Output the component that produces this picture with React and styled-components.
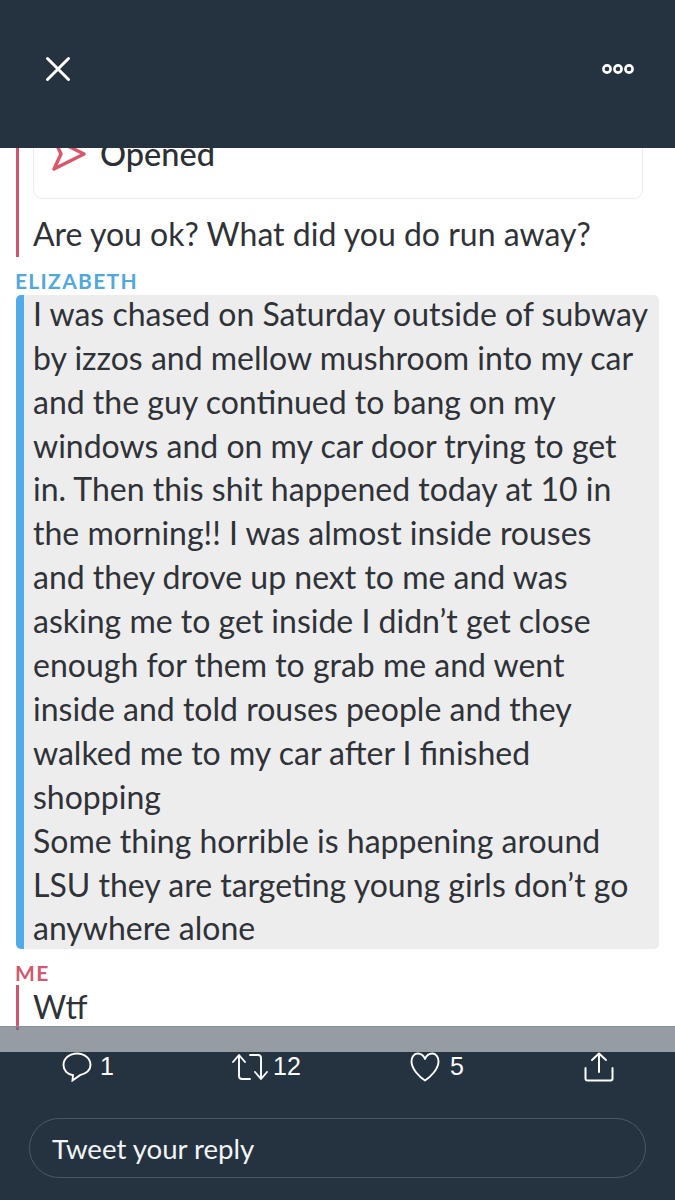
import styled, { createGlobalStyle } from "styled-components";

const GlobalStyle = createGlobalStyle`
  html, body {
    margin: 0;
    padding: 0;
    background: #fff;
  }
`;

const Page = styled.div`
  display: flex;
  flex-direction: column;
  width: 675px;
  height: 1200px;
  overflow: hidden;
  font-family: "Lato", "Liberation Sans", sans-serif;
`;

const Header = styled.header`
  display: flex;
  align-items: center;
  justify-content: space-between;
  flex: 0 0 148px;
  box-sizing: border-box;
  padding: 0 41px 11px 45px;
  background: #253341;
`;

const Feed = styled.main`
  position: relative;
  display: flex;
  flex-direction: column;
  justify-content: flex-end;
  flex: 0 0 904px;
  overflow: hidden;
  padding: 0 16px 22px;
  box-sizing: border-box;
`;

const Dimmer = styled.div`
  position: absolute;
  left: 0;
  right: 0;
  bottom: 0;
  height: 26px;
  background: rgba(105, 114, 124, 0.7);
  border-top: 1px solid #8a9097;
  box-sizing: border-box;
`;

const Name = styled.div`
  margin: ${(p) => p.$margin || "0"};
  font-size: 21px;
  line-height: 24px;
  font-weight: 700;
  letter-spacing: 1.3px;
  color: ${(p) => p.$color};
`;

const Thread = styled.div`
  border-left: 3px solid #d0566f;
  padding: 0 0 1px 14px;
`;

const Card = styled.div`
  display: flex;
  align-items: center;
  gap: 14px;
  box-sizing: border-box;
  width: 610px;
  height: 70px;
  padding: 0 0 20px 18px;
  border: 1px solid #ececec;
  border-top: 0;
  border-radius: 0 0 9px 9px;
`;

const CardLabel = styled.span`
  font-size: 32.5px;
  font-weight: 500;
  color: #2c2f35;
`;

const Message = styled.div`
  flex: none;
  font-size: 32px;
  line-height: 43.9px;
  color: #2f3237;
  white-space: nowrap;
`;

const Question = styled(Message)`
  padding-top: 13px;
`;

const Highlight = styled.div`
  display: flex;
  flex-direction: column;
  justify-content: center;
  flex: 0 0 654px;
  min-height: 0;
  box-sizing: border-box;
  width: 643px;
  padding: 0 0 2px 9px;
  margin-bottom: 12px;
  background: #ededee;
  border-left: 8px solid #52abe9;
  border-radius: 5px;
`;

const Footer = styled.footer`
  display: flex;
  flex-direction: column;
  flex: 1;
  background: #253341;
`;

const Actions = styled.div`
  display: grid;
  grid-template-columns: 170px 178px 174px 30px;
  align-items: start;
  padding-left: 62px;
  height: 66px;
`;

const Action = styled.div`
  display: flex;
  align-items: center;
  gap: ${(p) => p.$gap || 7}px;
  height: 29px;
  font-size: 25px;
  font-family: "Liberation Sans", sans-serif;
  color: #fff;
  svg {
    display: block;
  }
`;

const ReplyBox = styled.div`
  display: flex;
  align-items: center;
  box-sizing: border-box;
  width: 617px;
  height: 60px;
  margin-left: 29px;
  padding-left: 22px;
  border: 1.5px solid #4a5867;
  border-radius: 30px;
  font-size: 27.6px;
  color: #f2f4f5;
`;

const lines = [
  "I was chased on Saturday outside of subway",
  "by izzos and mellow mushroom into my car",
  "and the guy continued to bang on my",
  "windows and on my car door trying to get",
  "in. Then this shit happened today at 10 in",
  "the morning!! I was almost inside rouses",
  "and they drove up next to me and was",
  "asking me to get inside I didn\u2019t get close",
  "enough for them to grab me and went",
  "inside and told rouses people and they",
  "walked me to my car after I finished",
  "shopping",
  "Some thing horrible is happening around",
  "LSU they are targeting young girls don\u2019t go",
  "anywhere alone",
];

const CloseIcon = () => (
  <svg width="26" height="26" viewBox="0 0 26 26" fill="none" stroke="#fff" strokeWidth="3" strokeLinecap="round">
    <path d="M2.5 2.5l21 21M23.5 2.5l-21 21" />
  </svg>
);

const MoreIcon = () => (
  <svg width="32" height="12" viewBox="0 0 32 12" fill="none" stroke="#fff" strokeWidth="2.6">
    <circle cx="5" cy="6" r="3.6" />
    <circle cx="16" cy="6" r="3.6" />
    <circle cx="27" cy="6" r="3.6" />
  </svg>
);

const OpenedIcon = () => (
  <svg width="34" height="34" viewBox="0 0 34 34" fill="none" stroke="#d9566b" strokeWidth="3.4" strokeLinejoin="round">
    <path d="M2 32L9 17 2 2 32 17z" />
  </svg>
);

const ReplyIcon = () => (
  <svg width="30" height="30" viewBox="0 0 30 30" fill="none" stroke="#fff" strokeWidth="1.9">
    <path d="M15 1.500C7.500 1.500 1.500 6.500 1.500 13 1.500 18.500 5.500 22.500 11 23.200L10.500 28.500 18 23.200C24 21.500 28.500 18 28.500 13 28.500 6.500 22.500 1.500 15 1.500z" />
  </svg>
);

const RetweetIcon = () => (
  <svg width="36" height="28" viewBox="0 0 36 28" fill="none" stroke="#fff" strokeWidth="1.9" strokeLinecap="round" strokeLinejoin="round">
    <path d="M1 9l6-7 6 7M7 3v20c0 2 1 3 3 3h8" />
    <path d="M35 19l-6 7-6-7M29 25V5c0-2-1-3-3-3h-8" />
  </svg>
);

const HeartIcon = () => (
  <svg width="30" height="30" viewBox="0 0 30 30" fill="none" stroke="#fff" strokeWidth="1.9" strokeLinejoin="round">
    <path d="M15 7C13.500 3 10.500 1.500 7.500 1.500 4 1.500 1.500 5 1.500 9.500 1.500 17 9.500 25 15 28.500 20.500 25 28.500 17 28.500 9.500 28.500 5 26 1.500 22.500 1.500 19.500 1.500 16.500 3 15 7z" />
  </svg>
);

const ShareIcon = () => (
  <svg width="30" height="30" viewBox="0 0 30 30" fill="none" stroke="#fff" strokeWidth="2" strokeLinecap="round" strokeLinejoin="round">
    <path d="M15 20V1.500M8 8l7-6.500L22 8" />
    <path d="M1.500 16v10.500c0 1 .6 2 2 2h23c1.400 0 2-1 2-2V16" />
  </svg>
);

export default function App() {
  return (
    <Page>
      <GlobalStyle />
      <Header>
        <CloseIcon />
        <MoreIcon />
      </Header>
      <Feed>
        <Thread>
          <Card>
            <OpenedIcon />
            <CardLabel>Opened</CardLabel>
          </Card>
          <Question>Are you ok? What did you do run away?</Question>
        </Thread>
        <Name $color="#52a8dc" $margin="12px 0 2px -1px">ELIZABETH</Name>
        <Highlight>
          {lines.map((line) => (
            <Message key={line}>{line}</Message>
          ))}
        </Highlight>
        <Name $color="#cf5a72" $margin="0 0 0 -1px">ME</Name>
        <Thread>
          <Message>Wtf</Message>
        </Thread>
        <Dimmer />
      </Feed>
      <Footer>
        <Actions>
          <Action $gap={8}>
            <ReplyIcon />1
          </Action>
          <Action $gap={5}>
            <RetweetIcon />12
          </Action>
          <Action $gap={10}>
            <HeartIcon />5
          </Action>
          <Action>
            <ShareIcon />
          </Action>
        </Actions>
        <ReplyBox>Tweet your reply</ReplyBox>
      </Footer>
    </Page>
  );
}
